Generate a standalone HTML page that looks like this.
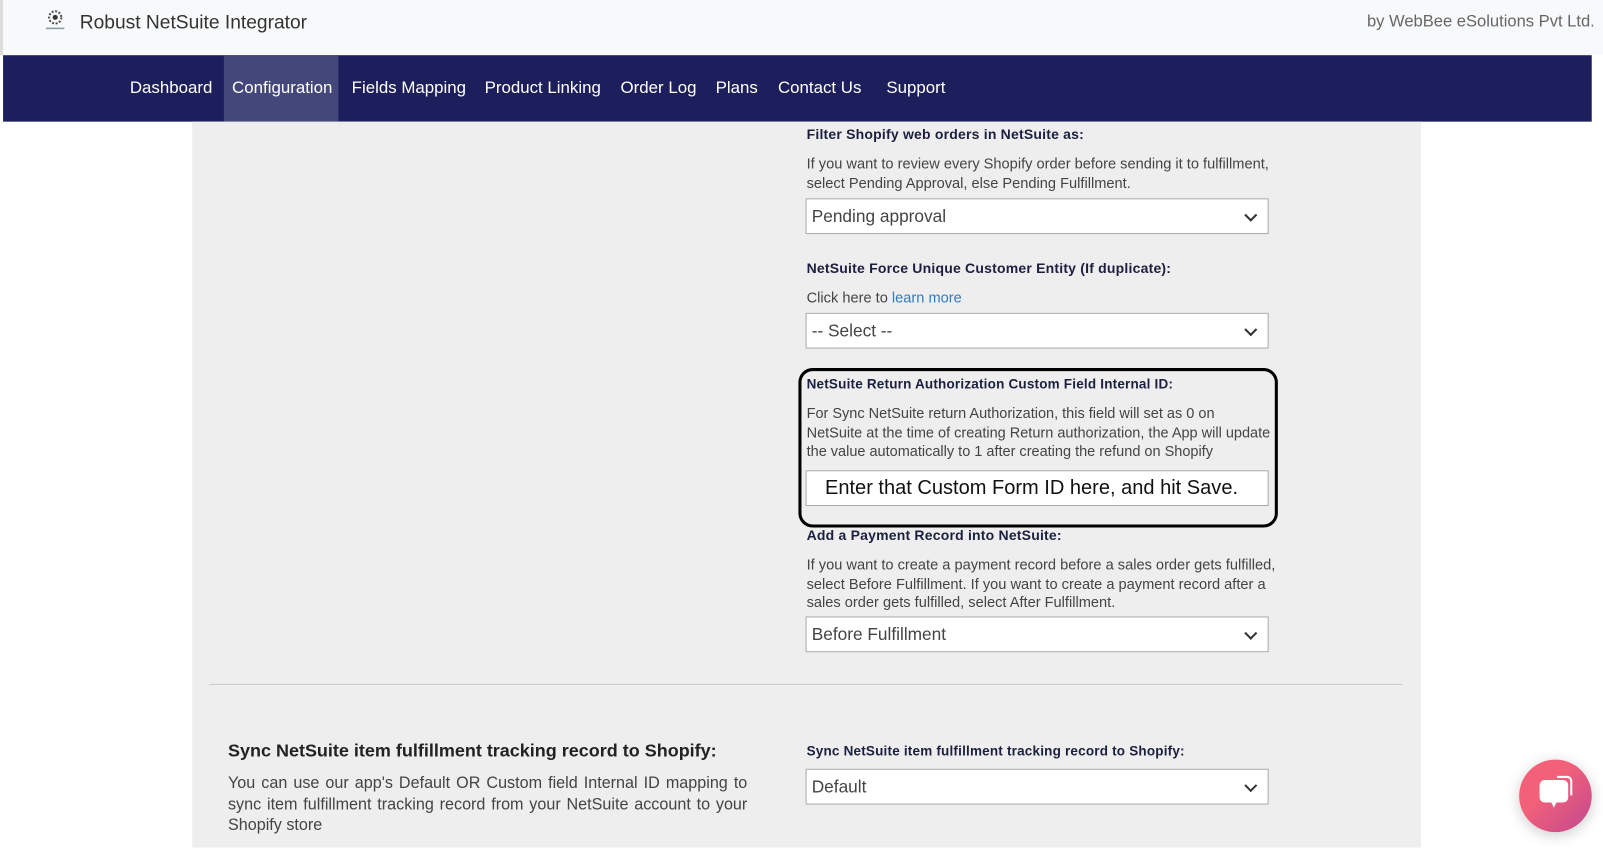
<!DOCTYPE html>
<html><head><meta charset="utf-8"><style>
*{margin:0;padding:0;box-sizing:border-box}
body{width:1603px;height:847px;overflow:hidden;background:#fff;font-family:"Liberation Sans",Arial,sans-serif;position:relative}
#w{position:absolute;left:0;top:0;width:1568px;height:829px;transform:scale(1.0223);transform-origin:0 0}
.a{position:absolute}
.hdr{left:0;top:0;width:1568px;height:54px;background:#f8f9fa;border-left:3px solid #ddd}
.nav{left:3px;top:54px;width:1554px;height:65px;background:#1c1f5b}
.nav span{position:absolute;top:23px;color:#fff;font-size:16.5px}
.panel{left:188px;top:119px;width:1202px;height:710px;background:#eeeeee}
.lbl{font-size:13.7px;font-weight:bold;color:#1c1f3f;letter-spacing:.2px;white-space:nowrap}
.txt{font-size:14.3px;color:#444;line-height:18.5px}
.sel{width:453px;height:35px;background:#fff;border:1px solid #aaa;font-size:16.9px;color:#444;padding:7px 5px}
.sel::after{content:"";position:absolute;right:12px;top:11px;width:7px;height:7px;border-right:2px solid #333;border-bottom:2px solid #333;transform:rotate(45deg)}
</style></head><body><div id="w">
<div class="a hdr"></div>
<div class="a" style="left:43px;top:8px;width:22px;height:22px;">
<svg width="22" height="22" viewBox="0 0 22 22"><circle cx="11" cy="9" r="6" fill="none" stroke="#555" stroke-width="2" stroke-dasharray="2 1.5"/><circle cx="11" cy="9" r="2.5" fill="#333"/><rect x="2" y="19" width="18" height="1.5" fill="#89a"/></svg></div>
<div class="a" style="left:78px;top:11px;font-size:18.8px;color:#333">Robust NetSuite Integrator</div>
<div class="a" style="right:8px;top:12px;font-size:16.2px;color:#666">by WebBee eSolutions Pvt Ltd.</div>
<div class="a nav">
<div class="a" style="left:216px;top:0;width:112px;height:65px;background:#44477a"></div>
<span style="left:124px">Dashboard</span><span style="left:224px">Configuration</span><span style="left:341px">Fields Mapping</span><span style="left:471px">Product Linking</span><span style="left:604px">Order Log</span><span style="left:697px">Plans</span><span style="left:758px">Contact Us</span><span style="left:864px">Support</span>
</div>
<div class="a panel"></div>
<div class="a lbl" style="left:789px;top:124px">Filter Shopify web orders in NetSuite as:</div>
<div class="a txt" style="left:789px;top:152px;width:460px">If you want to review every Shopify order before sending it to fulfillment, select Pending Approval, else Pending Fulfillment.</div>
<div class="a sel" style="left:788px;top:194px">Pending approval</div>
<div class="a lbl" style="left:789px;top:255px">NetSuite Force Unique Customer Entity (If duplicate):</div>
<div class="a txt" style="left:789px;top:283px">Click here to <span style="color:#337ab7">learn more</span></div>
<div class="a sel" style="left:788px;top:306px">-- Select --</div>
<div class="a" style="left:781px;top:360px;width:469px;height:156px;border:3px solid #000;border-radius:14px"></div>
<div class="a lbl" style="left:789px;top:368px;font-size:13.2px">NetSuite Return Authorization Custom Field Internal ID:</div>
<div class="a txt" style="left:789px;top:396px;width:455px;font-size:14.2px">For Sync NetSuite return Authorization, this field will set as 0 on NetSuite at the time of creating Return authorization, the App will update the value automatically to 1 after creating the refund on Shopify</div>
<div class="a" style="left:788px;top:460px;width:453px;height:35px;background:#fff;border:1px solid #aaa;font-size:19.6px;color:#111;padding:5px 18px;white-space:nowrap">Enter that Custom Form ID here, and hit Save.</div>
<div class="a lbl" style="left:789px;top:516px">Add a Payment Record into NetSuite:</div>
<div class="a txt" style="left:789px;top:544px;width:460px">If you want to create a payment record before a sales order gets fulfilled, select Before Fulfillment. If you want to create a payment record after a sales order gets fulfilled, select After Fulfillment.</div>
<div class="a sel" style="left:788px;top:603px">Before Fulfillment</div>
<div class="a" style="left:205px;top:669px;width:1167px;height:1px;background:#ccc"></div>
<div class="a" style="left:223px;top:724px;font-size:17.6px;font-weight:bold;color:#222;white-space:nowrap">Sync NetSuite item fulfillment tracking record to Shopify:</div>
<div class="a" style="left:223px;top:757px;width:508px;font-size:15.8px;color:#444;line-height:20.5px;text-align:justify">You can use our app's Default OR Custom field Internal ID mapping to sync item fulfillment tracking record from your NetSuite account to your Shopify store</div>
<div class="a lbl" style="left:789px;top:727px;font-size:13.2px">Sync NetSuite item fulfillment tracking record to Shopify:</div>
<div class="a sel" style="left:788px;top:752px">Default</div>
<div class="a" style="left:1486px;top:743px;width:71px;height:71px;border-radius:50%;background:linear-gradient(135deg,#f2607a 40%,#c1488f);box-shadow:0 3px 14px rgba(0,0,0,.2)">
<svg width="71" height="71" viewBox="0 0 71 71"><path d="M37 17h10a4 4 0 0 1 4 4v14" fill="none" stroke="#fff" stroke-width="2"/><rect x="20" y="20" width="28" height="22" rx="5" fill="#fff"/><path d="M31 41l3 6 3-6z" fill="#fff"/></svg></div>
</div></body></html>
